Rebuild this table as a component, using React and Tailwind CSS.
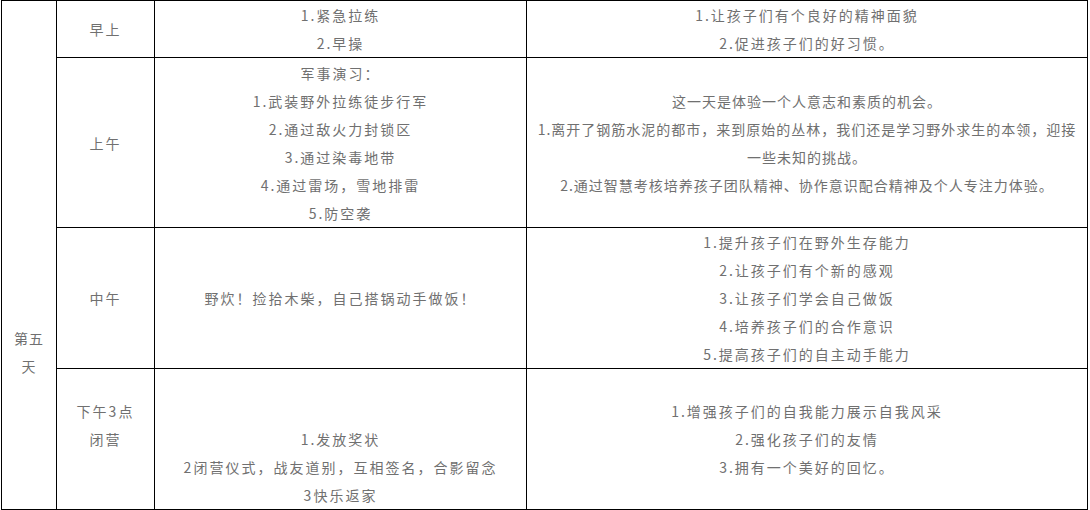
const rows = [
  {
    h: "h-[57px]",
    time: ["早上"],
    act: ["1.紧急拉练", "2.早操"],
    goal: ["1.让孩子们有个良好的精神面貌", "2.促进孩子们的好习惯。"],
  },
  {
    h: "h-[170px]",
    time: ["上午"],
    act: ["军事演习：", "1.武装野外拉练徒步行军", "2.通过敌火力封锁区", "3.通过染毒地带", "4.通过雷场，雪地排雷", "5.防空袭"],
    goal: [
      "这一天是体验一个人意志和素质的机会。",
      "1.离开了钢筋水泥的都市，来到原始的丛林，我们还是学习野外求生的本领，迎接",
      "一些未知的挑战。",
      "2.通过智慧考核培养孩子团队精神、协作意识配合精神及个人专注力体验。",
    ],
    tight: true,
  },
  {
    h: "h-[140px]",
    time: ["中午"],
    act: ["野炊！捡拾木柴，自己搭锅动手做饭！"],
    goal: ["1.提升孩子们在野外生存能力", "2.让孩子们有个新的感观", "3.让孩子们学会自己做饭", "4.培养孩子们的合作意识", "5.提高孩子们的自主动手能力"],
  },
  {
    h: "h-[141px]",
    time: ["下午3点", "闭营", ""],
    act: ["", "", "1.发放奖状", "2闭营仪式，战友道别，互相签名，合影留念", "3快乐返家"],
    goal: ["1.增强孩子们的自我能力展示自我风采", "2.强化孩子们的友情", "3.拥有一个美好的回忆。"],
  },
];

function Lines({ items, tight }) {
  return (
    <div className={tight ? "tracking-[1px]" : "tracking-[2px]"}>
      {items.map((t, i) => (
        <div key={i} className="h-[28px] whitespace-nowrap">
          {t}
        </div>
      ))}
    </div>
  );
}

export default function App() {
  return (
    <div className="bg-white w-[1090px] h-[510px] overflow-hidden pl-px">
      <table
        className="table-fixed border-collapse w-[1086px] text-center text-[14px] leading-[28px] text-[#707070]"
        style={{ fontFamily: '"Noto Sans CJK SC", "Noto Sans", sans-serif' }}
      >
        <colgroup>
          <col className="w-[55px]" />
          <col className="w-[98px]" />
          <col className="w-[372px]" />
          <col className="w-[561px]" />
        </colgroup>
        <tbody>
          {rows.map((r, i) => (
            <tr key={i} className={r.h}>
              {i === 0 && (
                <td rowSpan={4} className="border border-black align-top p-0 pt-[323px] tracking-[1px]">
                  第五
                  <br />
                  天
                </td>
              )}
              <td className="border border-black p-0 align-middle">
                <Lines items={r.time} />
              </td>
              <td className="border border-black p-0 align-middle">
                <Lines items={r.act} />
              </td>
              <td className="border border-black p-0 align-middle">
                <Lines items={r.goal} tight={r.tight} />
              </td>
            </tr>
          ))}
        </tbody>
      </table>
    </div>
  );
}
